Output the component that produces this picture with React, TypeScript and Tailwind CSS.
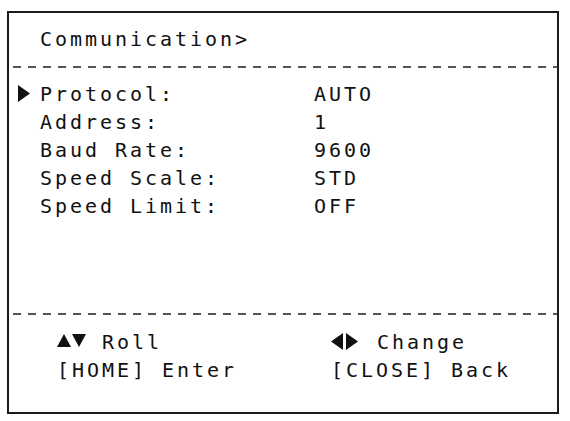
const rows = [
  { label: 'Protocol:', value: 'AUTO', active: true },
  { label: 'Address:', value: '1' },
  { label: 'Baud Rate:', value: '9600' },
  { label: 'Speed Scale:', value: 'STD' },
  { label: 'Speed Limit:', value: 'OFF' },
];

function Dashes() {
  return (
    <div className="ml-[4px] h-[2px] bg-[repeating-linear-gradient(90deg,#555_0_8px,transparent_8px_15px)]" />
  );
}

export default function App() {
  return (
    <div className="w-[570px] h-[421px] bg-white pt-[11px] pl-[7px]">
      <div className="w-[552px] h-[403px] border-2 border-[#1c1c1c] flex flex-col font-['DejaVu_Sans_Mono',monospace] text-[20px] leading-[28px] tracking-[2.96px] text-[#111] whitespace-pre">
        {/* header */}
        <div className="mt-[12px] pl-[31px]">Communication&gt;</div>
        <div className="mt-[13px]">
          <Dashes />
        </div>

        {/* settings */}
        <div className="mt-[12px] flex flex-col">
          {rows.map((r) => (
            <div key={r.label} className="flex h-[28px]">
              <div className="w-[31px]">
                {r.active && (
                  <svg width="12" height="17" viewBox="0 0 12 17" className="ml-[9px] mt-[5px]">
                    <polygon points="0,0 12,8.5 0,17" fill="#111" />
                  </svg>
                )}
              </div>
              <div className="w-[274px]">{r.label}</div>
              <div>{r.value}</div>
            </div>
          ))}
        </div>

        <div className="flex-1" />
        <Dashes />

        {/* key help */}
        <div className="mt-[13px] mb-[28px] flex">
          <div className="w-[274px] ml-[48px] flex flex-col">
            <div className="flex h-[28px]">
              <svg width="30" height="13" viewBox="0 0 30 13" className="mt-[6px]">
                <polygon points="0,13 7,0 14,13" fill="#111" />
                <polygon points="15,0 29,0 22,13" fill="#111" />
              </svg>
              <span> Roll</span>
            </div>
            <div>[HOME] Enter</div>
          </div>
          <div className="flex flex-col">
            <div className="flex h-[28px]">
              <svg width="31" height="17" viewBox="0 0 31 17" className="mt-[5px]">
                <polygon points="12,0 0,8.5 12,17" fill="#111" />
                <polygon points="15,0 27,8.5 15,17" fill="#111" />
              </svg>
              <span> Change</span>
            </div>
            <div>[CLOSE] Back</div>
          </div>
        </div>
      </div>
    </div>
  );
}
